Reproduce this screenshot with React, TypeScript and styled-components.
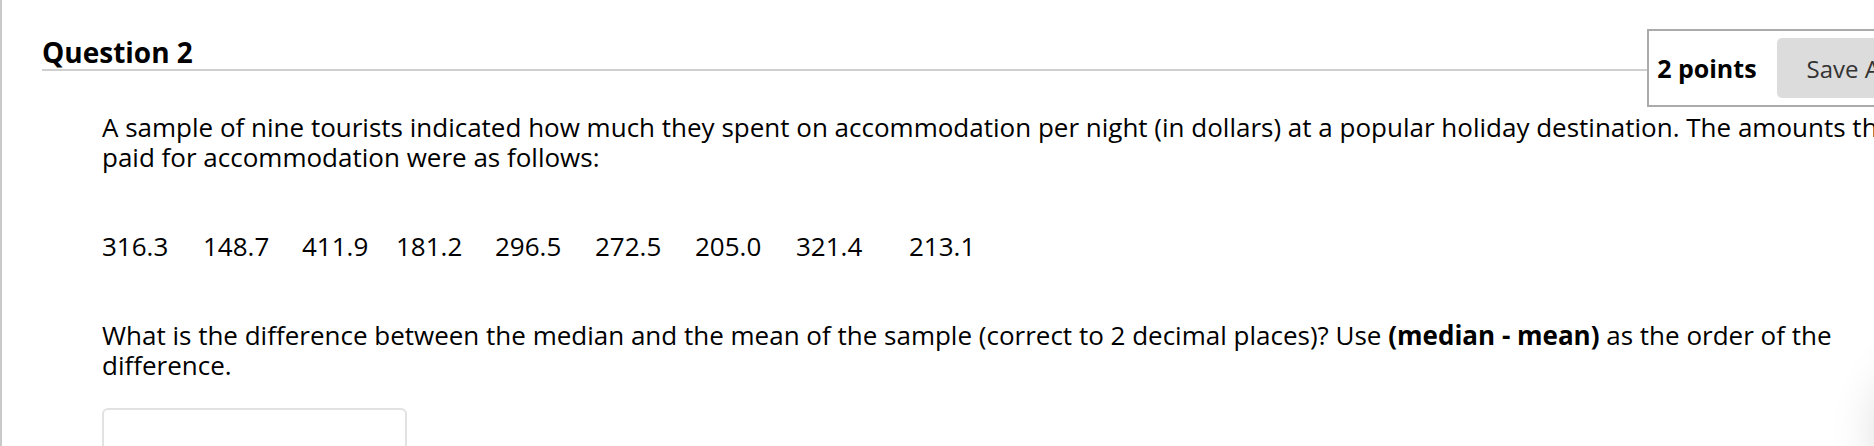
import styled, { createGlobalStyle } from "styled-components";

const GlobalStyle = createGlobalStyle`
  html, body {
    margin: 0;
    padding: 0;
    overflow: hidden;
    background: #fff;
  }
  body {
    font-family: "Open Sans", "Noto Sans", sans-serif;
    color: #000;
  }
`;

const Page = styled.div`
  box-sizing: border-box;
  width: 1988px;
  min-height: 446px;
  border-left: 2px solid #c9c9c9;
  padding-left: 40px;
`;

const Header = styled.div`
  display: flex;
  align-items: flex-start;
  padding-top: 29px;
`;

const Title = styled.h2`
  flex: 1;
  margin: 6px 0 0;
  font-size: 28px;
  font-weight: 700;
  line-height: 34px;
  border-bottom: 2px solid #cfcfcf;
`;

const PointsBox = styled.div`
  display: flex;
  align-items: center;
  gap: 20px;
  border: 2px solid #ababab;
  padding: 7px 8px;
`;

const Points = styled.span`
  font-size: 25px;
  font-weight: 700;
  line-height: 30px;
`;

const SaveButton = styled.button`
  height: 60px;
  padding: 0 30px;
  border: none;
  border-radius: 5px;
  background: #dcdcdc;
  color: #333;
  font-family: inherit;
  font-size: 24px;
  white-space: nowrap;
`;

const Body = styled.div`
  margin-left: 60px;
  width: 1828px;
  font-size: 26px;
  line-height: 30px;
`;

const Para = styled.p<{ top: number }>`
  margin: ${(p) => p.top}px 0 0;
`;

const Values = styled.div`
  display: flex;
  margin-top: 59px;
`;

const Value = styled.span<{ slot?: number }>`
  flex: none;
  width: ${(p) => (p.slot ? `${p.slot}px` : "auto")};
`;

const AnswerBox = styled.div`
  box-sizing: border-box;
  margin-top: 28px;
  width: 305px;
  height: 60px;
  border: 2px solid #e2e2e2;
  border-radius: 6px;
`;

// floating help button sits just off screen; only its shadow shows
const FloatShadow = styled.div`
  position: fixed;
  right: -140px;
  bottom: -50px;
  width: 130px;
  height: 130px;
  border-radius: 50%;
  background: #fff;
  box-shadow: 0 0 50px 6px rgba(0, 0, 0, 0.16);
`;

const values: [string, number?][] = [
  ["316.3", 101],
  ["148.7", 99],
  ["411.9", 94],
  ["181.2", 99],
  ["296.5", 100],
  ["272.5", 100],
  ["205.0", 101],
  ["321.4", 113],
  ["213.1"],
];

const App = () => {
  return (
    <>
      <GlobalStyle />
      <Page>
        <Header>
          <Title>Question 2</Title>
          <PointsBox>
            <Points>2 points</Points>
            <SaveButton>Save Answer</SaveButton>
          </PointsBox>
        </Header>
        <Body>
          <Para top={5}>
            A sample of nine tourists indicated how much they spent on
            accommodation per night (in dollars) at a popular holiday
            destination. The amounts they paid for accommodation were as
            follows:
          </Para>
          <Values>
            {values.map(([v, w]) => (
              <Value key={v} slot={w}>
                {v}
              </Value>
            ))}
          </Values>
          <Para top={59}>
            What is the difference between the median and the mean of the
            sample (correct to 2 decimal places)? Use{" "}
            <b>(median - mean)</b> as the order of the difference.
          </Para>
          <AnswerBox />
        </Body>
      </Page>
      <FloatShadow />
    </>
  );
};

export default App;
